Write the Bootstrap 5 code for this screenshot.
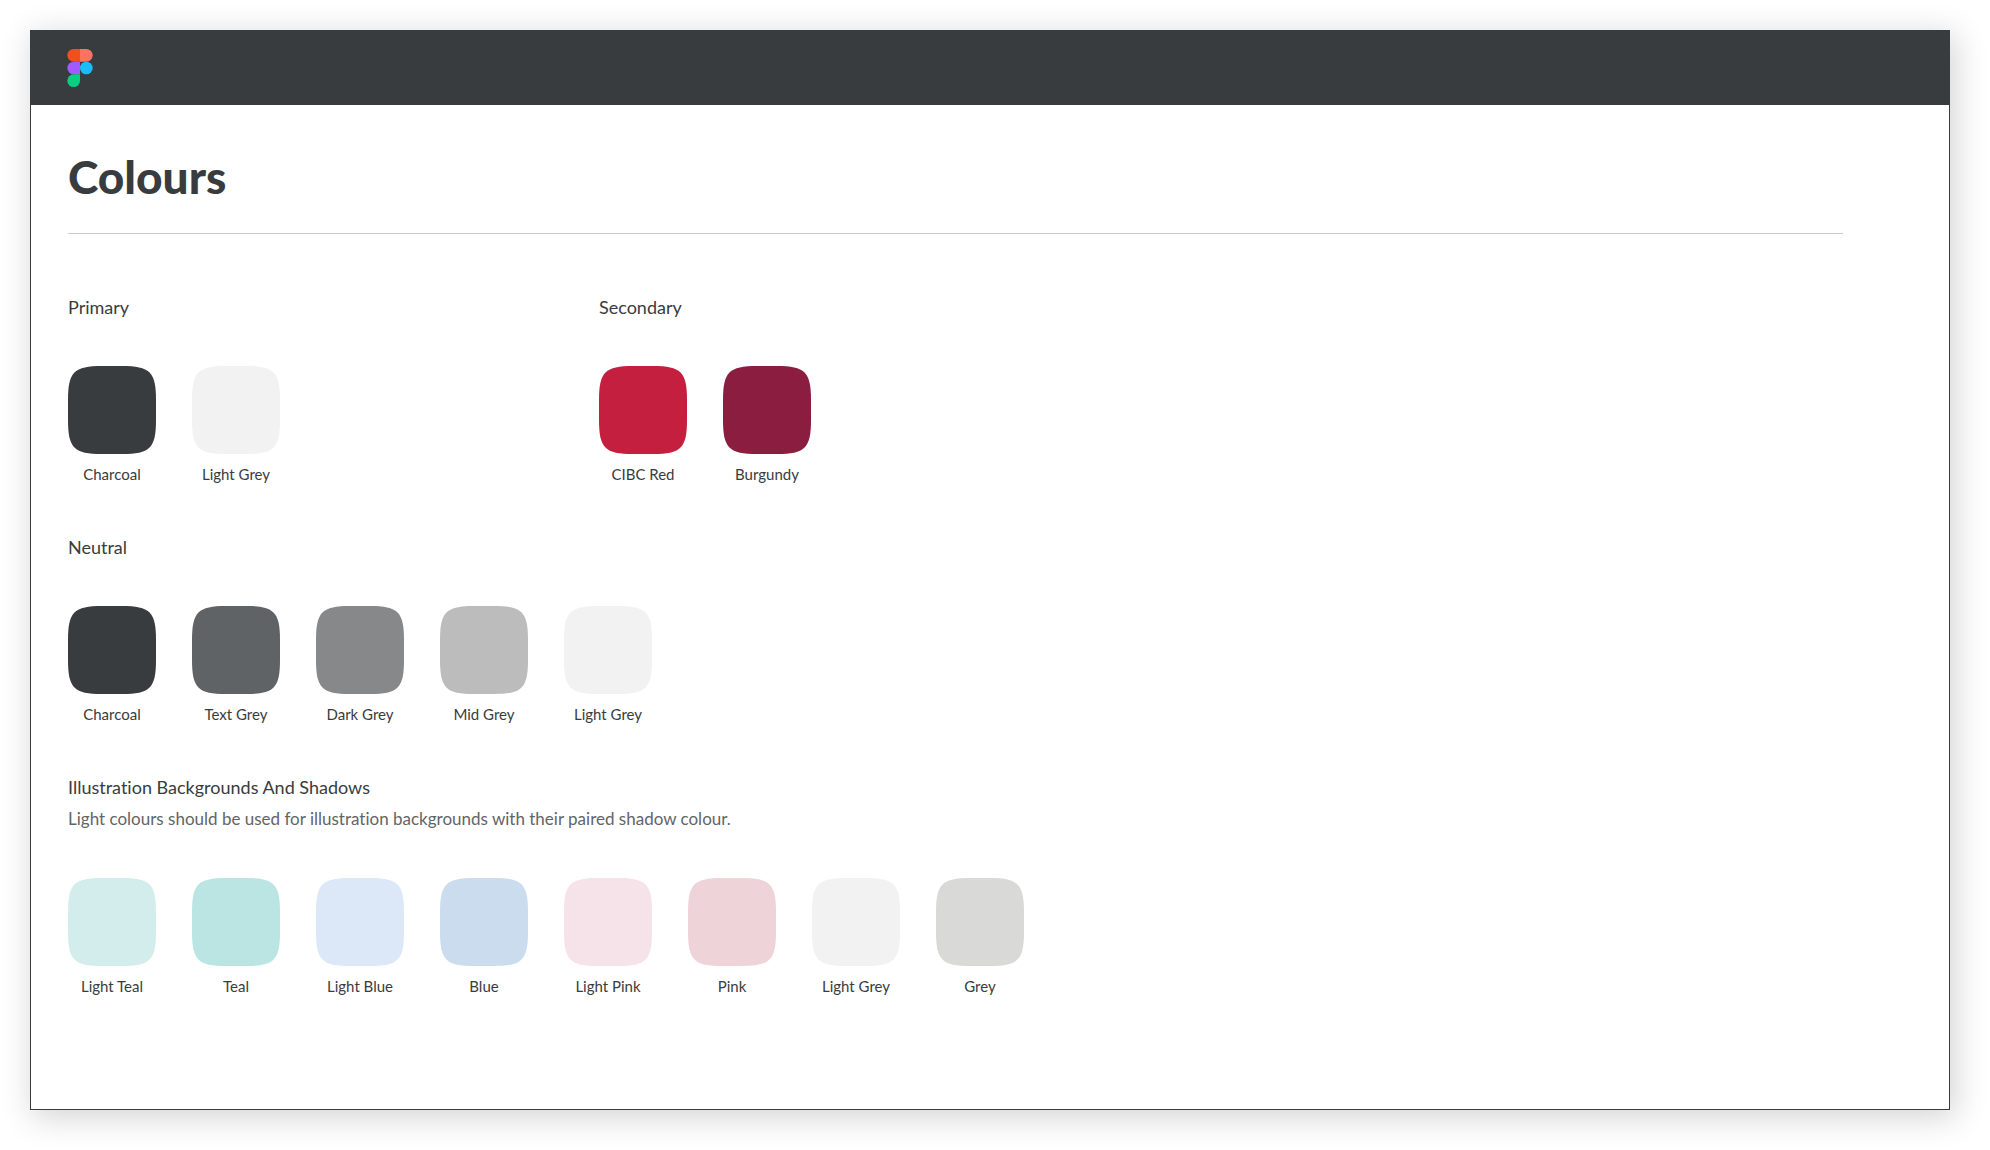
<!DOCTYPE html>
<html lang="en-CA">
<head>
<meta charset="utf-8">
<meta name="viewport" content="width=device-width, initial-scale=1">
<title>Colours</title>
<link href="https://cdn.jsdelivr.net/npm/bootstrap@5.3.0/dist/css/bootstrap.min.css" rel="stylesheet">
<style>
  body { font-family: Lato, "Open Sans", sans-serif; font-variant-ligatures: none; color: #393c3e; background: #fff; padding: 30px 40px 40px 30px; }
  .board { border: 1px solid #393c3e; background: #fff; box-shadow: 4px 6px 30px 2px rgba(0, 0, 0, .17); }
  .board-bar { background: #393c3e; height: 74px; padding: 0 36px; }
  .board-body { padding: 44px 106px 113px 37px; }
  .page-title { font-size: 46px; font-weight: 900; line-height: 56px; margin: 0; padding-bottom: 28px; border-bottom: 1px solid #ccc; }
  .group-list { padding-top: 61px; row-gap: 51px; }
  .group-wide { flex: 0 0 531px; }
  .group-title { font-size: 18px; font-weight: 400; line-height: 24px; margin: 0; }
  .group-note { font-size: 17px; line-height: 24px; margin: 8px 0 0; color: #626567; }
  .swatch-row { margin: 47px 0 0; gap: 36px; }
  .swatch { width: 88px; }
  .swatch svg { width: 88px; height: 88px; }
  .swatch-name { font-size: 15px; line-height: 20px; margin-top: 10px; white-space: nowrap; }
  .c-charcoal { color: #393c3e; }
  .c-text-grey { color: #606365; }
  .c-dark-grey { color: #878889; }
  .c-mid-grey { color: #bcbcbc; }
  .c-light-grey { color: #f2f2f2; }
  .c-red { color: #c41f3e; }
  .c-burgundy { color: #8b1d41; }
  .c-light-teal { color: #d3edec; }
  .c-teal { color: #bae5e2; }
  .c-light-blue { color: #dce8f7; }
  .c-blue { color: #ccdcef; }
  .c-light-pink { color: #f5e3e9; }
  .c-pink { color: #eed4d9; }
  .c-grey { color: #d9d9d8; }
</style>
<script src="https://cdn.jsdelivr.net/npm/bootstrap@5.3.0/dist/js/bootstrap.bundle.min.js"></script>
</head>
<body>
<svg class="d-none" aria-hidden="true">
  <symbol id="tile" viewBox="0 0 88 88"><path fill="currentColor" d="M0 34C0 6 6 0 34 0H54C82 0 88 6 88 34V54C88 82 82 88 54 88H34C6 88 0 82 0 54Z"/></symbol>
</svg>
<div class="board">
  <header class="board-bar d-flex align-items-center">
    <svg width="26" height="38" viewBox="0 0 38 57" role="img" aria-label="Figma">
      <path fill="#f24e1e" d="M9.500 0H19V19H9.500A9.500 9.500 0 0 1 9.500 0Z"/>
      <path fill="#ff7262" d="M19 0H28.500A9.500 9.500 0 0 1 28.500 19H19Z"/>
      <path fill="#a259ff" d="M9.500 19H19V38H9.500A9.500 9.500 0 0 1 9.500 19Z"/>
      <circle fill="#1abcfe" cx="28.500" cy="28.500" r="9.500"/>
      <path fill="#0acf83" d="M9.500 38H19V47.500A9.500 9.500 0 1 1 9.500 38Z"/>
    </svg>
  </header>
  <main class="board-body">
    <h1 class="page-title">Colours</h1>
    <div class="group-list d-flex flex-column">
      <div class="d-flex flex-wrap">
        <section class="group-wide">
          <h2 class="group-title">Primary</h2>
          <div class="swatch-row d-flex flex-wrap">
            <div class="swatch d-flex flex-column align-items-center"><svg class="c-charcoal" aria-hidden="true"><use href="#tile"/></svg><div class="swatch-name">Charcoal</div></div>
            <div class="swatch d-flex flex-column align-items-center"><svg class="c-light-grey" aria-hidden="true"><use href="#tile"/></svg><div class="swatch-name">Light Grey</div></div>
          </div>
        </section>
        <section>
          <h2 class="group-title">Secondary</h2>
          <div class="swatch-row d-flex flex-wrap">
            <div class="swatch d-flex flex-column align-items-center"><svg class="c-red" aria-hidden="true"><use href="#tile"/></svg><div class="swatch-name">CIBC Red</div></div>
            <div class="swatch d-flex flex-column align-items-center"><svg class="c-burgundy" aria-hidden="true"><use href="#tile"/></svg><div class="swatch-name">Burgundy</div></div>
          </div>
        </section>
      </div>
      <section>
        <h2 class="group-title">Neutral</h2>
        <div class="swatch-row d-flex flex-wrap">
          <div class="swatch d-flex flex-column align-items-center"><svg class="c-charcoal" aria-hidden="true"><use href="#tile"/></svg><div class="swatch-name">Charcoal</div></div>
          <div class="swatch d-flex flex-column align-items-center"><svg class="c-text-grey" aria-hidden="true"><use href="#tile"/></svg><div class="swatch-name">Text Grey</div></div>
          <div class="swatch d-flex flex-column align-items-center"><svg class="c-dark-grey" aria-hidden="true"><use href="#tile"/></svg><div class="swatch-name">Dark Grey</div></div>
          <div class="swatch d-flex flex-column align-items-center"><svg class="c-mid-grey" aria-hidden="true"><use href="#tile"/></svg><div class="swatch-name">Mid Grey</div></div>
          <div class="swatch d-flex flex-column align-items-center"><svg class="c-light-grey" aria-hidden="true"><use href="#tile"/></svg><div class="swatch-name">Light Grey</div></div>
        </div>
      </section>
      <section>
        <h2 class="group-title">Illustration Backgrounds And Shadows</h2>
        <p class="group-note">Light colours should be used for illustration backgrounds with their paired shadow colour.</p>
        <div class="swatch-row d-flex flex-wrap">
          <div class="swatch d-flex flex-column align-items-center"><svg class="c-light-teal" aria-hidden="true"><use href="#tile"/></svg><div class="swatch-name">Light Teal</div></div>
          <div class="swatch d-flex flex-column align-items-center"><svg class="c-teal" aria-hidden="true"><use href="#tile"/></svg><div class="swatch-name">Teal</div></div>
          <div class="swatch d-flex flex-column align-items-center"><svg class="c-light-blue" aria-hidden="true"><use href="#tile"/></svg><div class="swatch-name">Light Blue</div></div>
          <div class="swatch d-flex flex-column align-items-center"><svg class="c-blue" aria-hidden="true"><use href="#tile"/></svg><div class="swatch-name">Blue</div></div>
          <div class="swatch d-flex flex-column align-items-center"><svg class="c-light-pink" aria-hidden="true"><use href="#tile"/></svg><div class="swatch-name">Light Pink</div></div>
          <div class="swatch d-flex flex-column align-items-center"><svg class="c-pink" aria-hidden="true"><use href="#tile"/></svg><div class="swatch-name">Pink</div></div>
          <div class="swatch d-flex flex-column align-items-center"><svg class="c-light-grey" aria-hidden="true"><use href="#tile"/></svg><div class="swatch-name">Light Grey</div></div>
          <div class="swatch d-flex flex-column align-items-center"><svg class="c-grey" aria-hidden="true"><use href="#tile"/></svg><div class="swatch-name">Grey</div></div>
        </div>
      </section>
    </div>
  </main>
</div>
</body>
</html>
